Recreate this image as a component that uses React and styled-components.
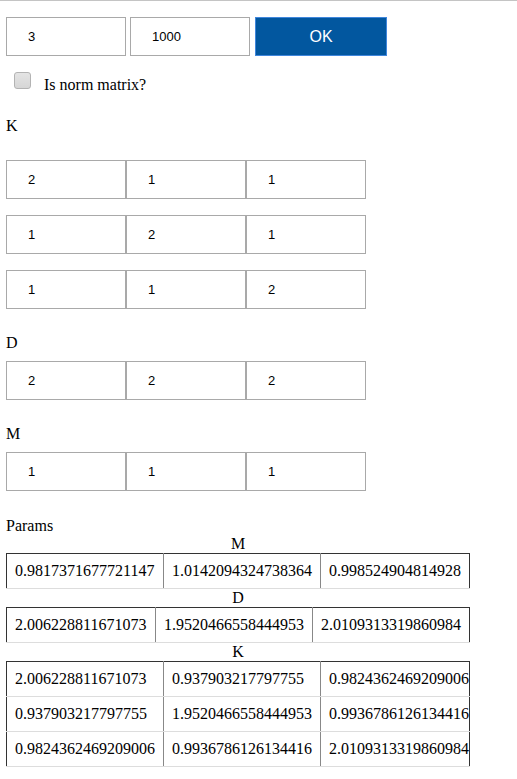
import styled, { createGlobalStyle } from 'styled-components';

const GlobalStyle = createGlobalStyle`
  html, body {
    margin: 0;
    padding: 0;
    background: #fff;
  }
  body {
    font-family: 'Liberation Serif', 'Times New Roman', serif;
    font-size: 16px;
    color: #000;
  }
`;

const Page = styled.div`
  border-top: 1px solid #c4c4c4;
  padding: 0 6px 20px;
`;

const TopRow = styled.div`
  display: flex;
  gap: 4px;
  margin-top: 16px;
`;

const Field = styled.input`
  box-sizing: border-box;
  width: 120px;
  height: 39px;
  margin: 0;
  border: 1px solid #a9a9a9;
  border-radius: 0;
  padding: 0 0 0 21px;
  font-family: 'Liberation Sans', Arial, sans-serif;
  font-size: 13px;
  color: #000;
  background: #fff;
  outline: none;
`;

const OkButton = styled.button`
  box-sizing: border-box;
  width: 132px;
  height: 39px;
  margin-left: 1px;
  border: 1px solid #3f86dc;
  background: #02579f;
  color: #fff;
  font-family: 'Liberation Sans', Arial, sans-serif;
  font-size: 16px;
  cursor: pointer;
`;

const CheckRow = styled.label`
  display: flex;
  align-items: flex-start;
  height: 20px;
  margin-top: 16px;
  padding-left: 8px;
`;

const Check = styled.input`
  appearance: none;
  box-sizing: border-box;
  width: 17px;
  height: 17px;
  margin: 0;
  border: 1px solid #b3b3b3;
  border-radius: 3px;
  background: linear-gradient(#e4e4e4, #d6d6d6);
`;

const CheckText = styled.span`
  margin: 4px 0 0 13px;
  line-height: 18px;
`;

const Label = styled.div`
  line-height: 18px;
  margin-top: ${(p) => p.$top}px;
`;

const Matrix = styled.div`
  display: flex;
  flex-direction: column;
  gap: 16px;
  margin-top: ${(p) => p.$top}px;
`;

const MatrixRow = styled.div`
  display: flex;
`;

const Params = styled.div`
  margin-top: 26px;
  line-height: 18px;
`;

const ResultTable = styled.table`
  width: 463px;
  table-layout: fixed;
  border-collapse: collapse;
  border-top: 1px solid #333;
  border-left: 1px solid #333;
  border-right: 1px solid #333;
  border-bottom: 1px solid #ddd;
`;

const Caption = styled.caption`
  line-height: 18px;
  text-align: center;
`;

const Cell = styled.td`
  padding: 8px 1px 8px 8px;
  line-height: 18px;
  white-space: nowrap;
  overflow: visible;
  border-left: 1px solid #888;
  border-bottom: 1px solid #ddd;
  &:first-child {
    border-left: none;
  }
`;

const kInputs = [
  ['2', '1', '1'],
  ['1', '2', '1'],
  ['1', '1', '2'],
];

const results = [
  {
    name: 'M',
    cols: [157, 157, 149],
    rows: [['0.9817371677721147', '1.0142094324738364', '0.998524904814928']],
  },
  {
    name: 'D',
    cols: [149, 157, 157],
    rows: [['2.006228811671073', '1.9520466558444953', '2.0109313319860984']],
  },
  {
    name: 'K',
    cols: [157, 157, 149],
    rows: [
      ['2.006228811671073', '0.937903217797755', '0.9824362469209006'],
      ['0.937903217797755', '1.9520466558444953', '0.9936786126134416'],
      ['0.9824362469209006', '0.9936786126134416', '2.0109313319860984'],
    ],
  },
];

const InputRow = ({ values }) => (
  <MatrixRow>
    {values.map((v, i) => (
      <Field key={i} defaultValue={v} />
    ))}
  </MatrixRow>
);

export default function App() {
  return (
    <>
      <GlobalStyle />
      <Page>
        <TopRow>
          <Field defaultValue="3" />
          <Field defaultValue="1000" />
          <OkButton>OK</OkButton>
        </TopRow>

        <CheckRow>
          <Check type="checkbox" />
          <CheckText>Is norm matrix?</CheckText>
        </CheckRow>

        <Label $top={25}>K</Label>
        <Matrix $top={25}>
          {kInputs.map((row, i) => (
            <InputRow key={i} values={row} />
          ))}
        </Matrix>

        <Label $top={25}>D</Label>
        <Matrix $top={9}>
          <InputRow values={['2', '2', '2']} />
        </Matrix>

        <Label $top={25}>M</Label>
        <Matrix $top={9}>
          <InputRow values={['1', '1', '1']} />
        </Matrix>

        <Params>Params</Params>
        {results.map((t) => (
          <ResultTable key={t.name}>
            <Caption>{t.name}</Caption>
            <colgroup>
              {t.cols.map((w, i) => (
                <col key={i} style={{ width: w }} />
              ))}
            </colgroup>
            <tbody>
              {t.rows.map((r, i) => (
                <tr key={i}>
                  {r.map((v, j) => (
                    <Cell key={j}>{v}</Cell>
                  ))}
                </tr>
              ))}
            </tbody>
          </ResultTable>
        ))}
      </Page>
    </>
  );
}
